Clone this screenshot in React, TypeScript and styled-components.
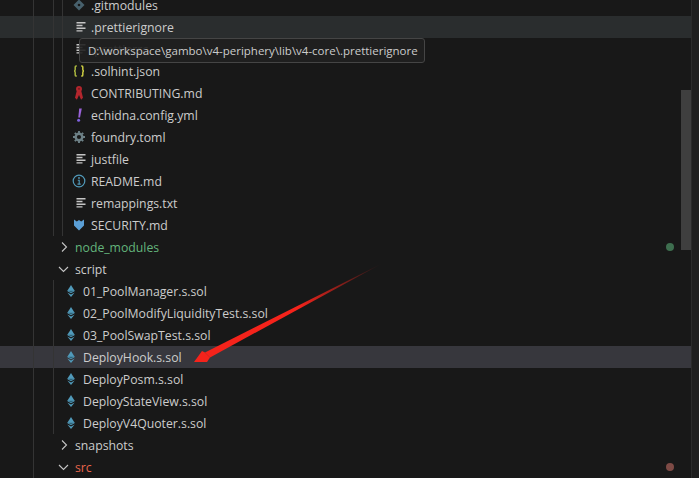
import React from 'react';
import styled, { createGlobalStyle } from 'styled-components';

const GlobalStyle = createGlobalStyle`
  html, body {
    margin: 0;
    padding: 0;
    background: #181818;
  }
`;

const ROW_HEIGHT = '22px';
const GUIDE_COLOR = '#343434';

const Page = styled.div`
  position: relative;
  display: flex;
  width: 699px;
  height: 478px;
  overflow: hidden;
  background: #181818;
  font-family: 'Open Sans', 'Noto Sans', sans-serif;
  font-size: 12.25px;
  color: #cccccc;
`;

const Tree = styled.div`
  flex: 1;
  min-width: 0;
  margin-top: -6px;
`;

const Track = styled.div`
  position: relative;
  width: 7px;
  border-left: 1px solid #2b2b2b;
  background: #1f1f1f;
`;

const Thumb = styled.div`
  position: absolute;
  left: -11px;
  top: 90px;
  width: 10px;
  height: 160px;
  background: #3f3f3f;
`;

const Row = styled.div<{ $active?: 'hover' | 'selected'; $pad: number }>`
  display: flex;
  align-items: center;
  height: ${ROW_HEIGHT};
  padding-left: ${({ $pad }) => $pad}px;
  background: ${({ $active }) =>
    $active === 'hover' ? '#2a2d2e' : $active === 'selected' ? '#37373d' : 'transparent'};
`;

const Guide = styled.span<{ $width: number; $off?: boolean }>`
  flex: none;
  box-sizing: border-box;
  align-self: stretch;
  width: ${({ $width }) => $width}px;
  border-left: 1px solid ${({ $off }) => ($off ? 'transparent' : GUIDE_COLOR)};
`;

const IconSlot = styled.span`
  flex: none;
  display: flex;
  align-items: center;
  justify-content: center;
  width: 16px;
  height: 16px;
  margin-right: 4px;
`;

const ChevronSlot = styled(IconSlot)`
  margin-right: 3px;
`;

const Label = styled.span<{ $color?: string }>`
  white-space: nowrap;
  color: ${({ $color }) => $color || '#cccccc'};
`;

const Dot = styled.span<{ $color: string }>`
  margin-left: auto;
  margin-right: 17px;
  width: 8px;
  height: 8px;
  border-radius: 50%;
  background: ${({ $color }) => $color};
`;

const Tooltip = styled.div`
  position: absolute;
  left: 79px;
  top: 38px;
  box-sizing: border-box;
  width: 346px;
  height: 25px;
  padding-left: 8px;
  display: flex;
  align-items: center;
  border: 1px solid #454545;
  border-radius: 3px;
  background: rgba(32, 32, 32, 0.9);
  font-size: 11.5px;
  white-space: nowrap;
`;

const Arrow = styled.svg`
  position: absolute;
  left: 190px;
  top: 260px;
`;

const Lines = ({ color = '#c5c5c5' }: { color?: string }) => (
  <svg width="16" height="16" viewBox="0 0 16 16">
    <path d="M5.500 3h9v1.400h-9zM5.500 5.800h6v1.400h-6zM5.500 8.600h9v1.400h-9zM5.500 11.200h6v1.300h-6z" fill={color} />
  </svg>
);

const Git = () => (
  <svg width="16" height="16" viewBox="0 0 16 16">
    <path d="M8 2.500 13.500 8 8 13.500 2.500 8z" fill="#47606c" />
    <circle cx="8" cy="8" r="1.300" fill="#181818" />
  </svg>
);

const Braces = () => (
  <svg width="16" height="16" viewBox="0 0 16 16" fill="none" strokeWidth="1.500">
    <path d="M5.800 3h-.6c-.8 0-1 .4-1 1.100v2.400C4.200 7.300 3.700 8 3 8c.7 0 1.200.7 1.200 1.500v2.400c0 .7.200 1.100 1 1.100h.6" stroke="#a9b53f" />
    <path d="M10.200 3h.6c.8 0 1 .4 1 1.100v2.400c0 .8.500 1.500 1.200 1.500-.7 0-1.200.7-1.200 1.500v2.400c0 .7-.2 1.100-1 1.100h-.6" stroke="#cbcb41" />
  </svg>
);

const Ribbon = () => (
  <svg width="16" height="16" viewBox="0 0 16 16">
    <path d="M8 1c2 0 3 1.300 3 2.900 0 .9-.3 1.600-.7 2.200l1.700 6.700-1.900 2-2.100-4.800-2.100 4.800-1.900-2 1.700-6.700C5.300 5.500 5 4.800 5 3.900 5 2.300 6 1 8 1z" fill="#b3262d" />
    <circle cx="8" cy="3.800" r="1.100" fill="#7c1c22" />
  </svg>
);

const Bang = () => (
  <svg width="16" height="16" viewBox="0 0 16 16">
    <path d="M8.200 1.500h2.600L9 10.500H7.300z" fill="#9a62d8" />
    <circle cx="7.600" cy="13.200" r="1.500" fill="#7f62e0" />
  </svg>
);

const Gear = () => (
  <svg width="16" height="16" viewBox="0 0 16 16" fill="none">
    <circle cx="8" cy="8" r="3.300" stroke="#6d8086" strokeWidth="2.400" />
    <path d="M8 2v2M8 12v2M2 8h2M12 8h2M3.800 3.800l1.400 1.400M10.800 10.800l1.400 1.400M12.200 3.800l-1.400 1.400M5.200 10.800l-1.400 1.400" stroke="#6d8086" strokeWidth="1.900" />
  </svg>
);

const Info = () => (
  <svg width="16" height="16" viewBox="0 0 16 16" fill="none">
    <circle cx="8" cy="8" r="5.800" stroke="#519aba" strokeWidth="1.200" />
    <path d="M6.800 7.200h1.400v3.800M6.500 11.100h3.200" stroke="#519aba" strokeWidth="1.100" />
    <circle cx="8" cy="5" r=".9" fill="#519aba" />
  </svg>
);

const Shield = () => (
  <svg width="16" height="16" viewBox="0 0 16 16">
    <path d="M3 2.500 5.800 4.500 8 3 10.200 4.500 13 2.500V8.500L8 13.500 3 8.500z" fill="#5b9fd6" />
  </svg>
);

const Eth = () => (
  <svg width="16" height="16" viewBox="0 0 16 16">
    <path d="M8 2 4.200 8 8 10.200 11.800 8z" fill="#519aba" />
    <path d="M4.300 9.500 8 14l3.700-4.500L8 11.500z" fill="#519aba" />
    <path d="M5 7.800h6L8 9.500z" fill="#2f6379" />
  </svg>
);

const Chevron = ({ open }: { open?: boolean }) => (
  <svg width="16" height="16" viewBox="0 0 16 16" fill="none">
    <path d={open ? 'M3 6 7.500 10.500 12 6' : 'M6 3.500 10.500 8 6 12.500'} stroke="#c5c5c5" strokeWidth="1.100" />
  </svg>
);

type FileRow = { name: string; icon: React.ReactNode; active?: 'hover' | 'selected' };

const rootFiles: FileRow[] = [
  { name: '.gitmodules', icon: <Git /> },
  { name: '.prettierignore', icon: <Lines />, active: 'hover' },
  { name: '.prettierrc', icon: <Lines /> },
  { name: '.solhint.json', icon: <Braces /> },
  { name: 'CONTRIBUTING.md', icon: <Ribbon /> },
  { name: 'echidna.config.yml', icon: <Bang /> },
  { name: 'foundry.toml', icon: <Gear /> },
  { name: 'justfile', icon: <Lines /> },
  { name: 'README.md', icon: <Info /> },
  { name: 'remappings.txt', icon: <Lines /> },
  { name: 'SECURITY.md', icon: <Shield /> },
];

const scriptFiles: FileRow[] = [
  { name: '01_PoolManager.s.sol', icon: <Eth /> },
  { name: '02_PoolModifyLiquidityTest.s.sol', icon: <Eth /> },
  { name: '03_PoolSwapTest.s.sol', icon: <Eth /> },
  { name: 'DeployHook.s.sol', icon: <Eth />, active: 'selected' },
  { name: 'DeployPosm.s.sol', icon: <Eth /> },
  { name: 'DeployStateView.s.sol', icon: <Eth /> },
  { name: 'DeployV4Quoter.s.sol', icon: <Eth /> },
];

export default function App() {
  return (
    <Page>
      <GlobalStyle />
      <Tree>
        {rootFiles.map((file) => (
          <Row key={file.name} $pad={33} $active={file.active}>
            <Guide $width={20} />
            <Guide $width={9} />
            <Guide $width={7} />
            <Guide $width={2} $off />
            <IconSlot>{file.icon}</IconSlot>
            <Label>{file.name}</Label>
          </Row>
        ))}
        <Row $pad={33}>
          <Guide $width={20} />
          <Guide $width={3} $off />
          <ChevronSlot>
            <Chevron />
          </ChevronSlot>
          <Label $color="#63b57c">node_modules</Label>
          <Dot $color="#3e6e4f" />
        </Row>
        <Row $pad={33}>
          <Guide $width={20} />
          <Guide $width={3} $off />
          <ChevronSlot>
            <Chevron open />
          </ChevronSlot>
          <Label>script</Label>
        </Row>
        {scriptFiles.map((file) => (
          <Row key={file.name} $pad={33} $active={file.active}>
            <Guide $width={20} />
            <Guide $width={9} />
            <Guide $width={1} $off />
            <IconSlot>{file.icon}</IconSlot>
            <Label>{file.name}</Label>
          </Row>
        ))}
        <Row $pad={33}>
          <Guide $width={20} />
          <Guide $width={3} $off />
          <ChevronSlot>
            <Chevron />
          </ChevronSlot>
          <Label>snapshots</Label>
        </Row>
        <Row $pad={33}>
          <Guide $width={20} />
          <Guide $width={3} $off />
          <ChevronSlot>
            <Chevron open />
          </ChevronSlot>
          <Label $color="#e8654c">src</Label>
          <Dot $color="#7d4a45" />
        </Row>
      </Tree>
      <Track>
        <Thumb />
      </Track>
      <Tooltip>D:\workspace\gambo\v4-periphery\lib\v4-core\.prettierignore</Tooltip>
      <Arrow width="200" height="110" viewBox="0 0 200 110">
        <defs>
          <linearGradient id="tail" x1="193" y1="3" x2="110" y2="50" gradientUnits="userSpaceOnUse">
            <stop offset="0" stopColor="#f5231b" stopOpacity="0" />
            <stop offset="1" stopColor="#f5231b" />
          </linearGradient>
        </defs>
        <path d="M193 3 15 92.500 20 97.500z" fill="url(#tail)" />
        <path d="M4 102 12 91 15 92.500 20 97.500 17 102z" fill="#f5231b" />
      </Arrow>
    </Page>
  );
}
